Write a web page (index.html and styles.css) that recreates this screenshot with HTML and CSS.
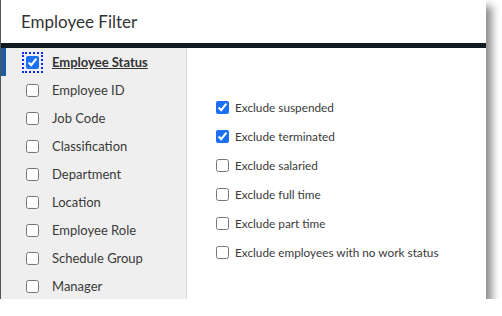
FILE: index.html
```html
<!doctype html>
<html>
    <head>
        <title>Employee Filter</title>
        <link rel="stylesheet" href="styles.css">
    </head>
    <body>
        <div class="dialog">
            <div class="dialog-header">Employee Filter</div>
            <div class="dialog-body">
                <!-- Filter categories -->
                <div class="sidebar">
                    <label class="category active">
                        <span class="focus-ring"><input type="checkbox" checked></span>
                        <span class="category-name">Employee Status</span>
                    </label>
                    <label class="category"><input type="checkbox"><span class="category-name">Employee ID</span></label>
                    <label class="category"><input type="checkbox"><span class="category-name">Job Code</span></label>
                    <label class="category"><input type="checkbox"><span class="category-name">Classification</span></label>
                    <label class="category"><input type="checkbox"><span class="category-name">Department</span></label>
                    <label class="category"><input type="checkbox"><span class="category-name">Location</span></label>
                    <label class="category"><input type="checkbox"><span class="category-name">Employee Role</span></label>
                    <label class="category"><input type="checkbox"><span class="category-name">Schedule Group</span></label>
                    <label class="category"><input type="checkbox"><span class="category-name">Manager</span></label>
                </div>

                <!-- Status options -->
                <div class="options">
                    <label class="option"><input type="checkbox" checked>Exclude suspended</label>
                    <label class="option"><input type="checkbox" checked>Exclude terminated</label>
                    <label class="option"><input type="checkbox">Exclude salaried</label>
                    <label class="option"><input type="checkbox">Exclude full time</label>
                    <label class="option"><input type="checkbox">Exclude part time</label>
                    <label class="option"><input type="checkbox">Exclude employees with no work status</label>
                </div>
            </div>
        </div>
    </body>
</html>
```

FILE: styles.css
```css
body {
    margin: 0;
    background-color: #fff;
    font-family: Lato, "Liberation Sans", sans-serif;
    color: #3a3a3a;
}

.dialog {
    width: 485px;
    height: 299px;
    border-left: 1px solid #555;
    background-color: #fff;
    box-shadow: 6px 6px 8px rgba(0,0,0,0.45);
    display: flex;
    flex-direction: column;
    overflow: hidden;
}

.dialog-header {
    height: 43px;
    flex-shrink: 0;
    display: flex;
    align-items: center;
    padding-left: 20px;
    font-size: 17px;
    color: #333;
    border-bottom: 5px solid #111a20;
}

.dialog-body {
    display: flex;
    flex: 1;
    min-height: 0;
}

.sidebar {
    width: 185px;
    flex-shrink: 0;
    background-color: #efefef;
    border-right: 1px solid #dcdcdc;
}

.category {
    height: 28px;
    display: flex;
    align-items: center;
    font-size: 13px;
    border-left: 5px solid transparent;
    margin-left: -5px;
    padding-left: 25px;
}

.category.active {
    border-left-color: #1f5da3;
    margin-left: 0;
    padding-left: 18px;
}

.category input,
.option input {
    width: 13px;
    height: 13px;
    margin: 0;
    accent-color: #1a6ff2;
}

.focus-ring {
    display: flex;
    padding: 2px;
    outline: 2px dotted #0a2cf5;
    margin-right: -2px;
}

.category-name {
    margin-left: 13px;
}

.category.active .category-name {
    font-weight: bold;
    text-decoration: underline;
    color: #333;
}

.options {
    flex: 1;
    padding: 45px 0 0 29px;
}

.option {
    height: 29px;
    display: flex;
    align-items: center;
    gap: 6px;
    font-size: 11.8px;
}
```
